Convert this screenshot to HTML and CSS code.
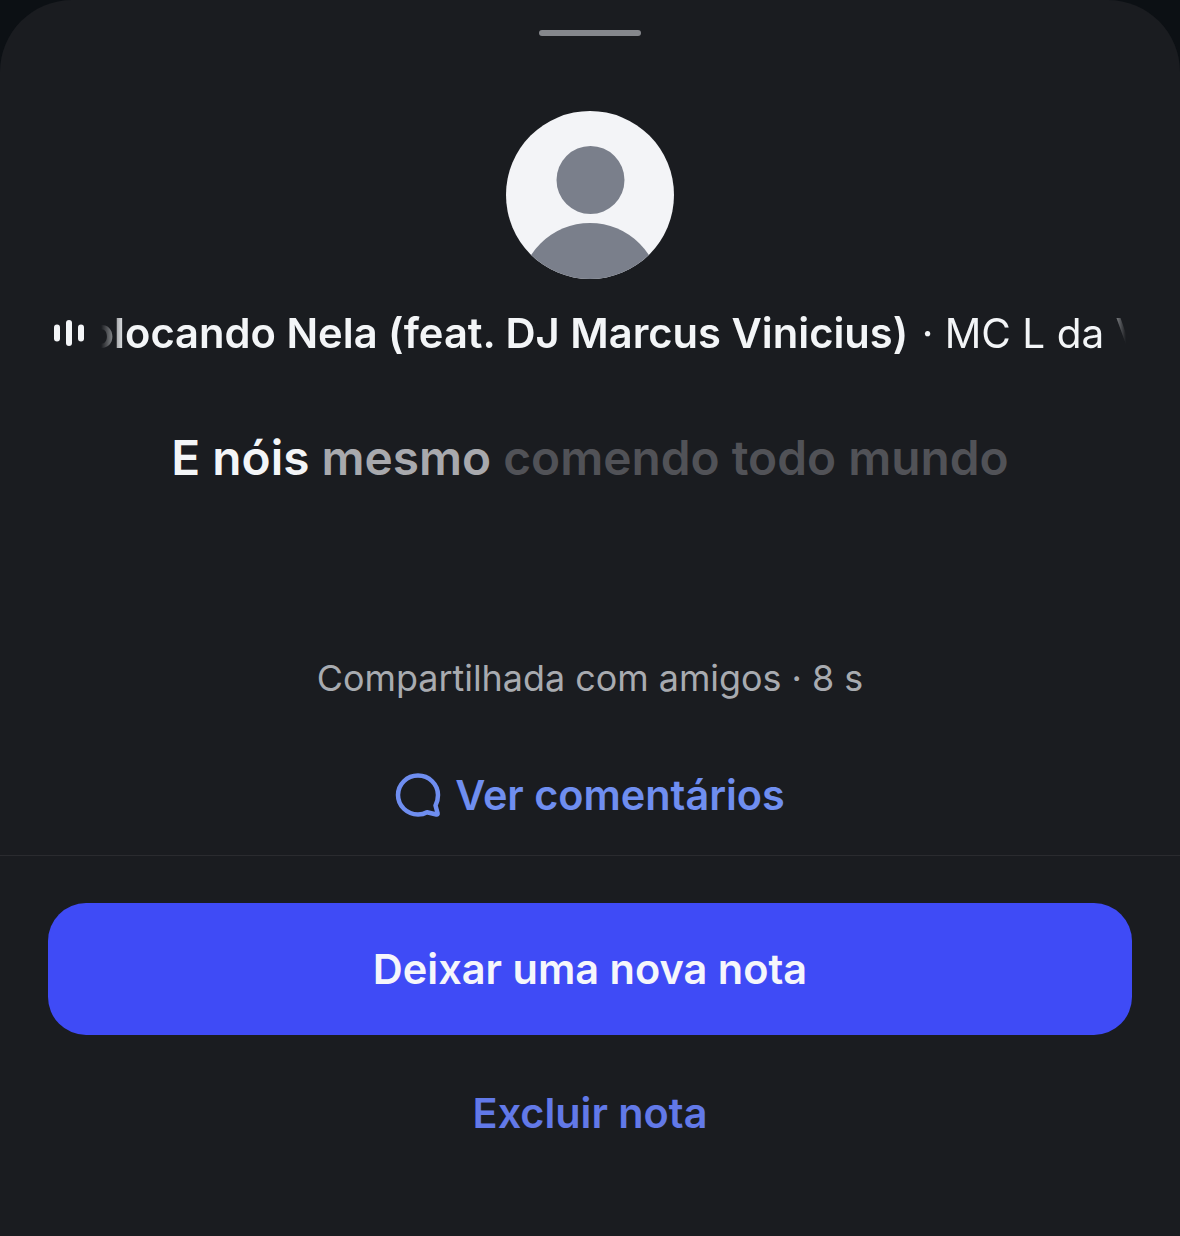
FILE: index.html
```html
<!DOCTYPE html>
<html lang="pt-BR">
<head>
    <meta charset="UTF-8">
    <meta name="viewport" content="width=device-width, initial-scale=1.0">
    <title>Nota</title>
    <link rel="stylesheet" href="styles.css">
</head>
<body>
    <div class="sheet">
        <div class="handle"></div>

        <svg class="avatar" viewBox="0 0 168 168">
            <defs>
                <clipPath id="avatarClip"><circle cx="84" cy="84" r="84"/></clipPath>
            </defs>
            <g clip-path="url(#avatarClip)">
                <rect width="168" height="168" fill="#f3f4f7"/>
                <circle cx="84.5" cy="69" r="34" fill="#7a7f8b"/>
                <circle cx="84" cy="182" r="70" fill="#7a7f8b"/>
            </g>
        </svg>

        <div class="track">
            <svg class="bars" viewBox="0 0 32 26">
                <rect x="1" y="4.500" width="6" height="17" rx="3"/>
                <rect x="13" y="0" width="6" height="26" rx="3"/>
                <rect x="25" y="4.500" width="6" height="17" rx="3"/>
            </svg>
            <div class="track-mask">
                <div class="track-text"><b>Colocando Nela (feat. DJ Marcus Vinicius)</b> · MC L da Vinci</div>
            </div>
        </div>

        <p class="lyric">E nóis <span class="mid">mesmo</span> <span class="dim">comendo todo mundo</span></p>

        <p class="shared">Compartilhada com amigos · 8 s</p>

        <div class="comments">
            <svg class="bubble" viewBox="0 0 46 46" fill="none">
                <path d="M23 3.500C12 3.500 3 12.300 3 23C3 33.700 12 42.500 23 42.500C26.500 42.500 29.500 41.700 32 40.200L41.500 42.500C42.300 42.700 42.800 42.100 42.600 41.300L40.500 33.500C42 30.600 43 27 43 23C43 12.300 34 3.500 23 3.500Z" stroke="#6f8ef0" stroke-width="4.500" stroke-linejoin="round"/>
            </svg>
            <span>Ver comentários</span>
        </div>

        <div class="actions">
            <button class="new-btn">Deixar uma nova nota</button>
            <button class="delete-btn">Excluir nota</button>
        </div>
    </div>
</body>
</html>
```

FILE: styles.css
```css
* {
    box-sizing: border-box;
}
html, body {
    margin: 0;
    padding: 0;
    height: 100%;
}
body {
    width: 1180px;
    height: 1236px;
    overflow: hidden;
    background-color: #0c1014;
    font-family: Inter, "Liberation Sans", sans-serif;
    color: #f3f5f7;
}
.sheet {
    height: 1236px;
    background-color: #1a1c20;
    border-radius: 72px 72px 0 0;
    display: flex;
    flex-direction: column;
    align-items: center;
}
.handle {
    width: 102px;
    height: 6px;
    margin-top: 30px;
    border-radius: 3px;
    background-color: #85878c;
}
.avatar {
    display: block;
    width: 168px;
    height: 168px;
    margin-top: 75px;
}
.track {
    display: flex;
    align-items: center;
    width: 100%;
    height: 50px;
    margin-top: 29px;
    padding: 0 52px 0 53px;
}
.bars {
    flex: none;
    width: 32px;
    height: 26px;
    fill: #f3f5f7;
    margin-right: 16px;
}
.track-mask {
    flex: 1;
    overflow: hidden;
    white-space: nowrap;
    font-size: 40.500px;
    -webkit-mask-image: linear-gradient(to right, transparent 0, #000 24px, #000 calc(100% - 24px), transparent calc(100% - 2px));
    mask-image: linear-gradient(to right, transparent 0, #000 24px, #000 calc(100% - 24px), transparent calc(100% - 2px));
}
.track-text {
    margin-left: -43px;
}
.track-text b {
    font-size: 41.700px;
    font-weight: 600;
    margin-right: 2px;
}
.lyric {
    margin: 73px 0 0;
    font-size: 47.800px;
    line-height: 54px;
    font-weight: 600;
    color: #f3f5f7;
}
.lyric .mid {
    color: #a8a9ad;
}
.lyric .dim {
    color: #515257;
}
.shared {
    margin: 171px 0 0;
    font-size: 35.900px;
    line-height: 44px;
    color: #a8abb0;
}
.comments {
    display: flex;
    align-items: center;
    gap: 14px;
    height: 50px;
    margin-top: 70px;
    font-size: 41.400px;
    font-weight: 600;
    color: #6f8ef0;
}
.bubble {
    width: 46px;
    height: 46px;
}
.actions {
    align-self: stretch;
    margin-top: 35px;
    padding: 47px 48px 0;
    border-top: 1px solid #2a2b2f;
    display: flex;
    flex-direction: column;
}
button {
    border: none;
    background: none;
    padding: 0;
    font-family: inherit;
    font-size: 41.500px;
    font-weight: 600;
    cursor: pointer;
}
.new-btn {
    height: 132px;
    border-radius: 38px;
    background-color: #3f4bf6;
    color: #f5f6fb;
}
.delete-btn {
    margin-top: 53px;
    height: 50px;
    font-size: 41.400px;
    color: #6279e8;
}
```
